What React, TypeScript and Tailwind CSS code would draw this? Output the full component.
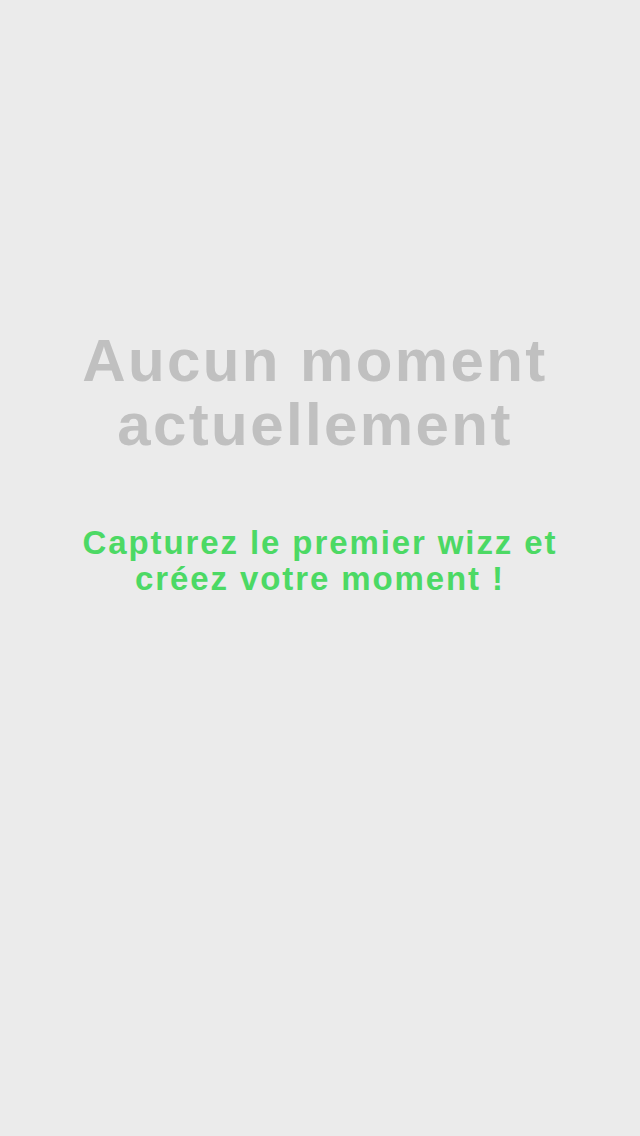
import React from 'react';

export default function App() {
  return (
    <div className="min-h-screen w-full bg-[#ebebeb] flex flex-col items-center pt-[329px] px-6 font-['Liberation_Sans',Arial,sans-serif] font-bold text-center">
      <h1 className="pr-[10px] text-[60px] leading-[64px] tracking-[2.4px] text-[#c0c0c0]">
        Aucun moment
        <br />
        actuellement
      </h1>
      <p className="mt-[68px] text-[33px] leading-[36px] tracking-[1.9px] text-[#4cd964]">
        Capturez le premier wizz et
        <br />
        créez votre moment !
      </p>
    </div>
  );
}
